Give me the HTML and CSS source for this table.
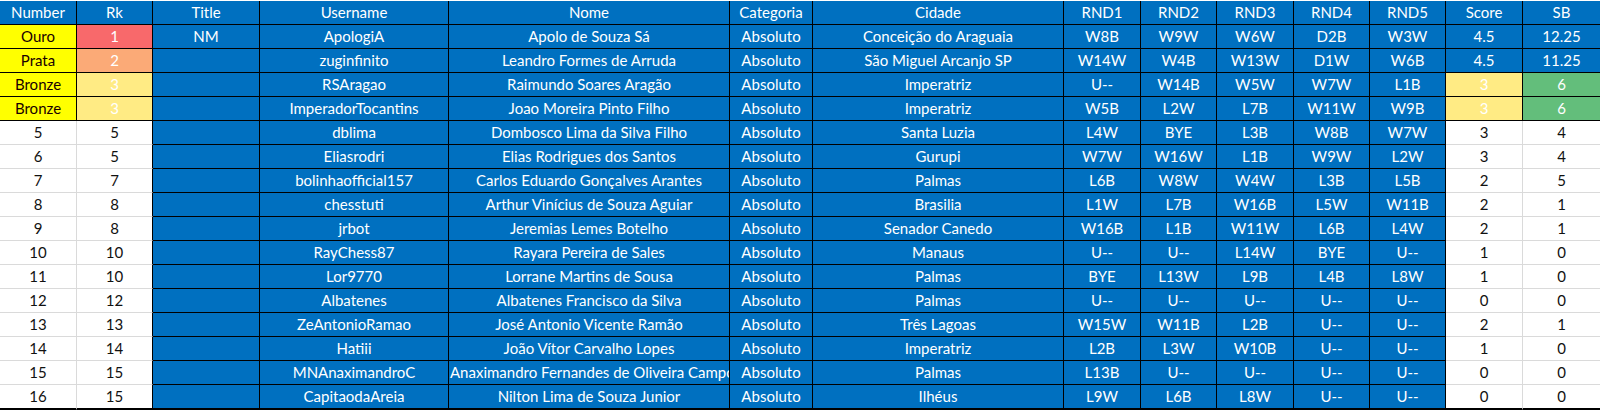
FILE: index.html
```html
<!DOCTYPE html>
<html lang="pt">
<head>
<meta charset="utf-8">
<title>Classificação</title>
<link rel="stylesheet" href="styles.css">
</head>
<body>
<table class="sheet">
<colgroup>
<col class="c77"><col class="c76"><col class="c107"><col class="c189"><col class="c281"><col class="c83"><col class="c251"><col class="c77"><col class="c76"><col class="c77"><col class="c76"><col class="c76"><col class="c77"><col class="c77">
</colgroup>
<thead>
<tr class="head">
<th>Number</th><th>Rk</th><th>Title</th><th>Username</th><th>Nome</th><th>Categoria</th><th>Cidade</th><th>RND1</th><th>RND2</th><th>RND3</th><th>RND4</th><th>RND5</th><th>Score</th><th>SB</th>
</tr>
</thead>
<tbody>
<tr>
<td class="medal">Ouro</td><td class="rk1">1</td><td class="b">NM</td><td class="b">ApologiA</td><td class="b">Apolo de Souza Sá</td><td class="b">Absoluto</td><td class="b">Conceição do Araguaia</td><td class="b">W8B</td><td class="b">W9W</td><td class="b">W6W</td><td class="b">D2B</td><td class="b">W3W</td><td class="b">4.5</td><td class="b">12.25</td>
</tr>
<tr>
<td class="medal">Prata</td><td class="rk2">2</td><td class="b"></td><td class="b">zuginfinito</td><td class="b">Leandro Formes de Arruda</td><td class="b">Absoluto</td><td class="b">São Miguel Arcanjo SP</td><td class="b">W14W</td><td class="b">W4B</td><td class="b">W13W</td><td class="b">D1W</td><td class="b">W6B</td><td class="b">4.5</td><td class="b">11.25</td>
</tr>
<tr>
<td class="medal">Bronze</td><td class="rk3">3</td><td class="b"></td><td class="b">RSAragao</td><td class="b">Raimundo Soares Aragão</td><td class="b">Absoluto</td><td class="b">Imperatriz</td><td class="b">U--</td><td class="b">W14B</td><td class="b">W5W</td><td class="b">W7W</td><td class="b">L1B</td><td class="rk3">3</td><td class="grn">6</td>
</tr>
<tr>
<td class="medal">Bronze</td><td class="rk3">3</td><td class="b"></td><td class="b">ImperadorTocantins</td><td class="b">Joao Moreira Pinto Filho</td><td class="b">Absoluto</td><td class="b">Imperatriz</td><td class="b">W5B</td><td class="b">L2W</td><td class="b">L7B</td><td class="b">W11W</td><td class="b">W9B</td><td class="rk3">3</td><td class="grn">6</td>
</tr>
<tr>
<td class="w">5</td><td class="w wr">5</td><td class="b"></td><td class="b">dblima</td><td class="b">Dombosco Lima da Silva Filho</td><td class="b">Absoluto</td><td class="b">Santa Luzia</td><td class="b">L4W</td><td class="b">BYE</td><td class="b">L3B</td><td class="b">W8B</td><td class="b">W7W</td><td class="w">3</td><td class="w">4</td>
</tr>
<tr>
<td class="w">6</td><td class="w wr">5</td><td class="b"></td><td class="b">Eliasrodri</td><td class="b">Elias Rodrigues dos Santos</td><td class="b">Absoluto</td><td class="b">Gurupi</td><td class="b">W7W</td><td class="b">W16W</td><td class="b">L1B</td><td class="b">W9W</td><td class="b">L2W</td><td class="w">3</td><td class="w">4</td>
</tr>
<tr>
<td class="w">7</td><td class="w wr">7</td><td class="b"></td><td class="b">bolinhaofficial157</td><td class="b">Carlos Eduardo Gonçalves Arantes</td><td class="b">Absoluto</td><td class="b">Palmas</td><td class="b">L6B</td><td class="b">W8W</td><td class="b">W4W</td><td class="b">L3B</td><td class="b">L5B</td><td class="w">2</td><td class="w">5</td>
</tr>
<tr>
<td class="w">8</td><td class="w wr">8</td><td class="b"></td><td class="b">chesstuti</td><td class="b">Arthur Vinícius de Souza Aguiar</td><td class="b">Absoluto</td><td class="b">Brasilia</td><td class="b">L1W</td><td class="b">L7B</td><td class="b">W16B</td><td class="b">L5W</td><td class="b">W11B</td><td class="w">2</td><td class="w">1</td>
</tr>
<tr>
<td class="w">9</td><td class="w wr">8</td><td class="b"></td><td class="b">jrbot</td><td class="b">Jeremias Lemes Botelho</td><td class="b">Absoluto</td><td class="b">Senador Canedo</td><td class="b">W16B</td><td class="b">L1B</td><td class="b">W11W</td><td class="b">L6B</td><td class="b">L4W</td><td class="w">2</td><td class="w">1</td>
</tr>
<tr>
<td class="w">10</td><td class="w wr">10</td><td class="b"></td><td class="b">RayChess87</td><td class="b">Rayara Pereira de Sales</td><td class="b">Absoluto</td><td class="b">Manaus</td><td class="b">U--</td><td class="b">U--</td><td class="b">L14W</td><td class="b">BYE</td><td class="b">U--</td><td class="w">1</td><td class="w">0</td>
</tr>
<tr>
<td class="w">11</td><td class="w wr">10</td><td class="b"></td><td class="b">Lor9770</td><td class="b">Lorrane Martins de Sousa</td><td class="b">Absoluto</td><td class="b">Palmas</td><td class="b">BYE</td><td class="b">L13W</td><td class="b">L9B</td><td class="b">L4B</td><td class="b">L8W</td><td class="w">1</td><td class="w">0</td>
</tr>
<tr>
<td class="w">12</td><td class="w wr">12</td><td class="b"></td><td class="b">Albatenes</td><td class="b">Albatenes Francisco da Silva</td><td class="b">Absoluto</td><td class="b">Palmas</td><td class="b">U--</td><td class="b">U--</td><td class="b">U--</td><td class="b">U--</td><td class="b">U--</td><td class="w">0</td><td class="w">0</td>
</tr>
<tr>
<td class="w">13</td><td class="w wr">13</td><td class="b"></td><td class="b">ZeAntonioRamao</td><td class="b">José Antonio Vicente Ramão</td><td class="b">Absoluto</td><td class="b">Três Lagoas</td><td class="b">W15W</td><td class="b">W11B</td><td class="b">L2B</td><td class="b">U--</td><td class="b">U--</td><td class="w">2</td><td class="w">1</td>
</tr>
<tr>
<td class="w">14</td><td class="w wr">14</td><td class="b"></td><td class="b">Hatiii</td><td class="b">João Vítor Carvalho Lopes</td><td class="b">Absoluto</td><td class="b">Imperatriz</td><td class="b">L2B</td><td class="b">L3W</td><td class="b">W10B</td><td class="b">U--</td><td class="b">U--</td><td class="w">1</td><td class="w">0</td>
</tr>
<tr>
<td class="w">15</td><td class="w wr">15</td><td class="b"></td><td class="b">MNAnaximandroC</td><td class="b">Anaximandro Fernandes de Oliveira Campos</td><td class="b">Absoluto</td><td class="b">Palmas</td><td class="b">L13B</td><td class="b">U--</td><td class="b">U--</td><td class="b">U--</td><td class="b">U--</td><td class="w">0</td><td class="w">0</td>
</tr>
<tr class="last">
<td class="w">16</td><td class="w wr">15</td><td class="b"></td><td class="b">CapitaodaAreia</td><td class="b">Nilton Lima de Souza Junior</td><td class="b">Absoluto</td><td class="b">Ilhéus</td><td class="b">L9W</td><td class="b">L6B</td><td class="b">L8W</td><td class="b">U--</td><td class="b">U--</td><td class="w">0</td><td class="w">0</td>
</tr>
</tbody>
</table>
</body>
</html>
```
FILE: styles.css
```css
html, body {
  margin: 0;
  padding: 0;
  background: #ffffff;
}
body {
  padding-top: 1px;
  font-family: Lato, "Open Sans", "Liberation Sans", sans-serif;
  font-size: 15px;
}
.sheet {
  table-layout: fixed;
  width: 1600px;
  border-collapse: separate;
  border-spacing: 0;
}
.c77 { width: 77px; }
.c76 { width: 76px; }
.c107 { width: 107px; }
.c189 { width: 189px; }
.c281 { width: 281px; }
.c83 { width: 83px; }
.c251 { width: 251px; }
.sheet th,
.sheet td {
  height: 23px;
  padding: 0 1px;
  box-sizing: border-box;
  text-align: center;
  vertical-align: middle;
  white-space: nowrap;
  overflow: hidden;
  font-weight: normal;
  line-height: 23px;
  border-right: 1px solid #000;
  border-bottom: 1px solid #000;
}
.sheet tr > :last-child { border-right: 0; }
.head th {
  background: #0070c0;
  color: #ffffff;
  height: 24px;
}
.b { background: #0070c0; color: #ffffff; }
.medal { background: #ffff00; color: #1a0000; }
.rk1 { background: #f8696b; color: #ffffff; }
.rk2 { background: #fbaa77; color: #ffffff; }
.rk3 { background: #ffeb84; color: #ffffff; }
.grn { background: #63be7b; color: #ffffff; }
.sheet td.w {
  background: #ffffff;
  color: #111111;
  border-right-color: #dadada;
  border-bottom-color: #dadada;
}
.sheet td.wr { border-right-color: #000; }
.last td { border-bottom: 2px solid #000; height: 24px; }
.sheet .last td.w { border-bottom-color: #000; }
```
